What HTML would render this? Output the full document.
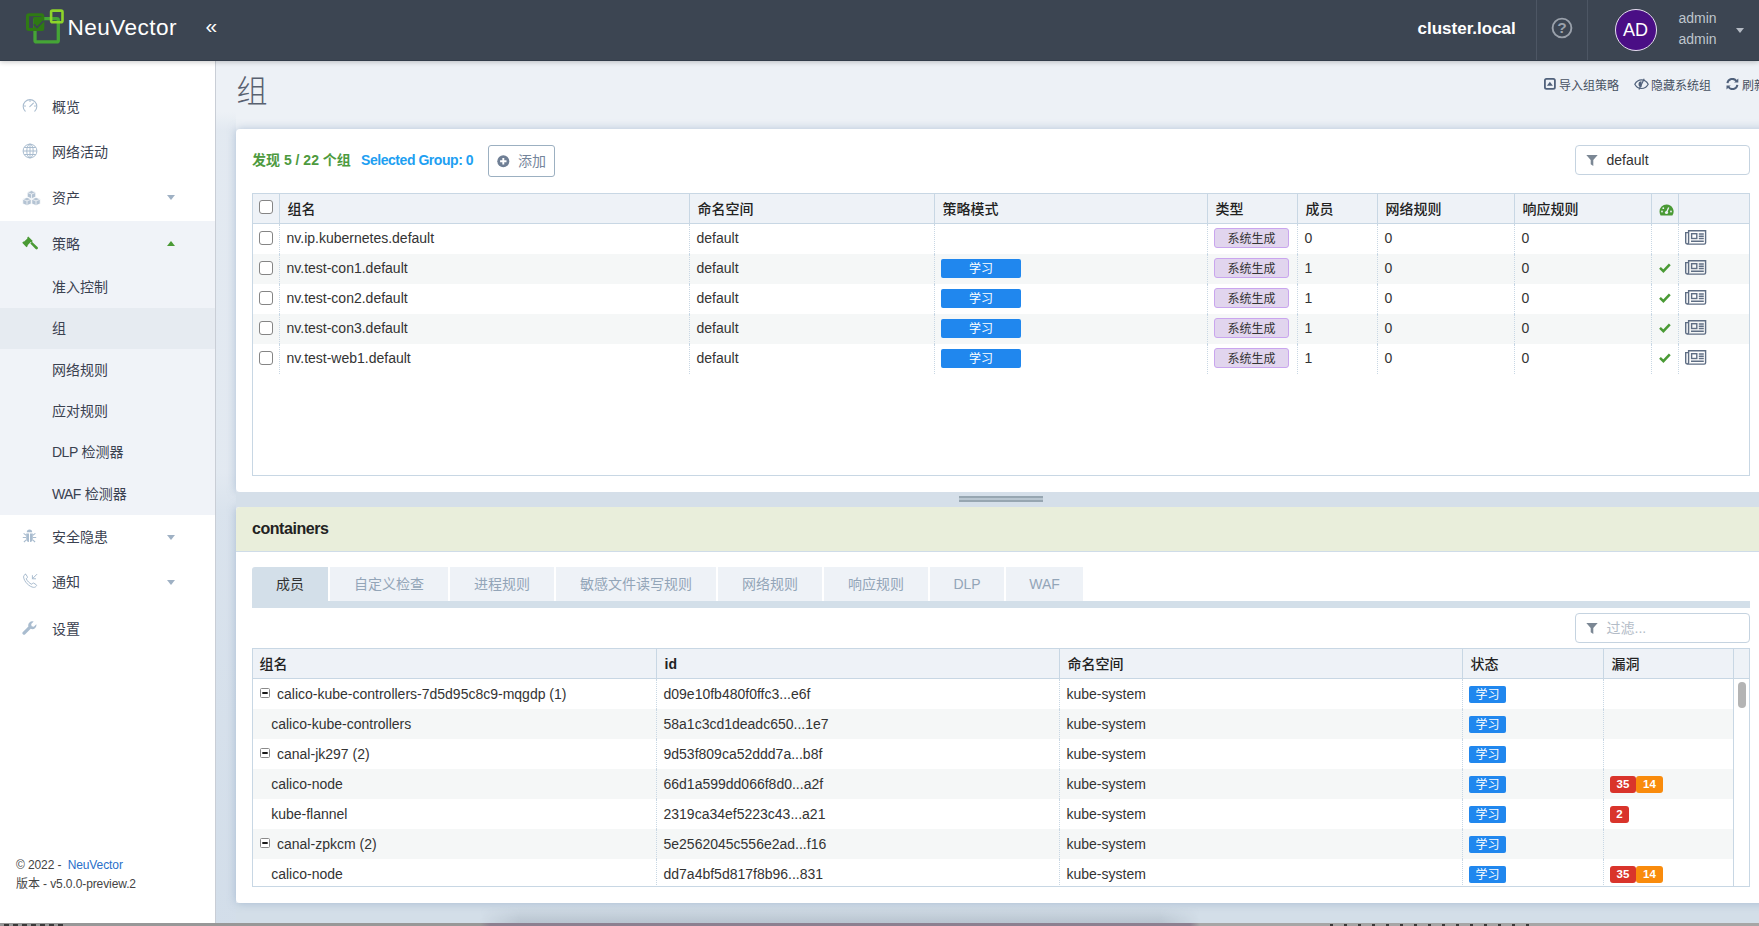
<!DOCTYPE html>
<html lang="zh-CN">
<head>
<meta charset="utf-8">
<title>NeuVector</title>
<style>
*{box-sizing:border-box;margin:0;padding:0}
html,body{width:1759px;height:926px;overflow:hidden}
body{position:relative;background:#edf1f6;font-family:"Liberation Sans","Noto Sans CJK SC",sans-serif;font-size:14px;color:#333;}
.abs{position:absolute}
/* header */
#hdr{position:absolute;left:0;top:0;width:1759px;height:61px;background:#3c4552;border-bottom:1px solid #323c49;z-index:20;box-shadow:0 1px 5px rgba(0,0,0,.22)}
#brand{position:absolute;left:67.500px;top:13.500px;font-size:22.600px;line-height:28px;color:#fff;letter-spacing:.45px}
#coll{position:absolute;left:205.500px;top:14px;font-size:21px;line-height:24px;color:#fff}
#cluster{position:absolute;left:1417.500px;top:17.500px;font-size:17px;line-height:22px;font-weight:bold;color:#fff;white-space:nowrap}
.vsep{position:absolute;top:0;width:1px;height:60px;background:#4d5664}
#avatar{position:absolute;left:1614.500px;top:9px;width:42px;height:42px;border-radius:50%;background:#4a0e85;border:1px solid #e6dff0;color:#fff;font-size:18px;line-height:40px;text-align:center}
.uname{position:absolute;left:1678.500px;font-size:14px;line-height:18px;color:#bfc5cd}
/* sidebar */
#side{position:absolute;left:0;top:60px;width:216px;height:866px;background:#fff;border-right:1px solid #c9ced6;z-index:10}
.mi{position:absolute;left:0;width:215px;height:45.5px;line-height:47.300px;padding-left:52px;font-size:14px;color:#3a4150}
.smi{position:absolute;left:0;width:215px;height:41.4px;line-height:43.200px;padding-left:52px;font-size:14px;color:#3a4150}
.mi svg,.mi .car{position:absolute}
.car{left:166.700px;top:20px;width:0;height:0;border-left:4.5px solid transparent;border-right:4.5px solid transparent;border-top:5px solid #9fb1c4}
.car.up{border-top:none;border-bottom:5px solid #4a9a35}
#sub{position:absolute;left:0;top:160.5px;width:215px;height:294px;background:#f0f3f8}
#foot{position:absolute;left:16px;top:796px;font-size:12px;line-height:19px;color:#444;letter-spacing:-.1px}
#foot a{color:#2a6fc9;text-decoration:none}
/* content */
.card{position:absolute;background:#fff;border-radius:4px 0 0 4px;box-shadow:0 0 9px rgba(120,150,185,.5)}
h1{position:absolute;left:236.500px;top:71px;font-size:31px;line-height:42px;font-weight:300;color:#596170;font-family:"Liberation Sans","Noto Sans CJK SC",sans-serif}
.act{position:absolute;top:77.500px;font-size:12px;line-height:16px;color:#465061;white-space:nowrap}
.grid{position:absolute;border:1px solid #c8d7e4;background:#fff;overflow:hidden}
.gh{position:absolute;left:0;top:0;height:30px;background:#eef2f7;border-bottom:1px solid #c8d7e4;width:100%}
.gh div{position:absolute;top:0;height:29px;line-height:31px;font-weight:500;font-size:14px;color:#222;border-left:1px solid #c8d7e4;padding-left:7.500px;white-space:nowrap}
.row{position:absolute;left:0;height:30px;width:100%}
.row.odd{background:#f5f7f7}
.row div.c{position:absolute;top:0;height:30px;line-height:28px;font-size:14px;color:#333;border-left:1px dotted #c8d7e4;padding-left:6.500px;white-space:nowrap;overflow:hidden}
.cb{position:absolute;left:7px;width:14px;height:14px;border:1px solid #858585;border-radius:3px;background:#fff}
#g2 .row div.c{line-height:30px}
.learn{position:absolute;left:6px;top:5px;width:80px;height:19px;border-radius:2px;background:#2087ee;color:#fff;font-size:12px;line-height:21px;text-align:center;overflow:hidden}
.sys{position:absolute;left:6px;top:4px;width:75px;height:20px;border-radius:3px;background:#e1d5ee;border:1px solid #c9a5ee;color:#333;font-size:12px;line-height:20px;text-align:center;overflow:hidden}
.slearn{position:absolute;left:6px;top:7px;width:37px;height:17px;border-radius:2px;background:#2087ee;color:#fff;font-size:12px;line-height:18px;text-align:center;overflow:hidden}
.vb{position:absolute;top:7px;height:17px;color:#fff;font-size:11.500px;font-weight:bold;line-height:17px;text-align:center}
.tab{position:absolute;top:567px;height:34px;line-height:34px;background:#eef2f7;color:#93a5b8;font-size:14px;text-align:center;white-space:nowrap}
.flt{position:absolute;height:30px;border:1px solid #c5d3e0;border-radius:4px;background:#fff;font-size:14px;line-height:28px;padding-left:30.500px;color:#333}
</style>
</head>
<body>
<!-- HEADER -->
<div id="hdr">
  <svg class="abs" style="left:24px;top:7px" width="44" height="40" viewBox="0 0 44 40">
    <rect x="11" y="11.600" width="23.300" height="23.300" rx="1.500" fill="none" stroke="#45a536" stroke-width="3.300"/>
    <rect x="9.400" y="10" width="10.500" height="13.500" fill="#2f7a14"/>
    <rect x="3.500" y="7.700" width="15.300" height="14.900" rx="1.500" fill="none" stroke="#2f7a14" stroke-width="3"/>
    <path d="M10 17.300l3 3.300l6.600-6.800" fill="none" stroke="#3c4553" stroke-width="1.700"/>
    <rect x="27.100" y="3.600" width="11.400" height="11.600" rx="1.500" fill="none" stroke="#8ed42a" stroke-width="2.600"/>
  </svg>
  <div id="brand">NeuVector</div>
  <div id="coll">«</div>
  <div id="cluster">cluster.local</div>
  <div class="vsep" style="left:1536px"></div>
  <div class="vsep" style="left:1587px"></div>
  <svg class="abs" style="left:1551px;top:17px" width="22" height="22" viewBox="0 0 22 22">
    <circle cx="11" cy="11" r="9.400" fill="none" stroke="#9aa1ab" stroke-width="1.900"/>
    <text x="11" y="16.400" font-size="15.500" font-weight="bold" text-anchor="middle" fill="#9aa1ab" font-family="Liberation Sans, sans-serif">?</text>
  </svg>
  <div id="avatar">AD</div>
  <div class="uname" style="top:9px">admin</div>
  <div class="uname" style="top:30px">admin</div>
  <div class="abs" style="left:1736px;top:28px;width:0;height:0;border-left:4.5px solid transparent;border-right:4.5px solid transparent;border-top:5px solid #b5bbc4"></div>
</div>

<!-- SIDEBAR -->
<div id="side">
  <div id="sub"></div>
  <div class="abs" style="left:0;top:248px;width:215px;height:41px;background:#e6ebf1"></div>
  <div class="mi" style="top:24px">概览</div>
  <div class="mi" style="top:68.500px">网络活动</div>
  <div class="mi" style="top:115px">资产<span class="car"></span></div>
  <div class="mi" style="top:160.500px">策略<span class="car up"></span></div>
  <div class="smi" style="top:206px">准入控制</div>
  <div class="smi" style="top:247.400px">组</div>
  <div class="smi" style="top:288.800px">网络规则</div>
  <div class="smi" style="top:330.200px">应对规则</div>
  <div class="smi" style="top:370.600px"><span style="letter-spacing:-.5px">DLP</span> 检测器</div>
  <div class="smi" style="top:413px"><span style="letter-spacing:-.6px">WAF</span> 检测器</div>
  <div class="mi" style="top:453.500px">安全隐患<span class="car" style="top:21px"></span></div>
  <div class="mi" style="top:499px">通知<span class="car" style="top:21px"></span></div>
  <div class="mi" style="top:545.500px">设置</div>

  <!-- sidebar icons -->
  <svg class="abs" style="left:22px;top:38px" width="16" height="16" viewBox="0 0 16 16" fill="none" stroke="#a9bccf" stroke-width="1.100" stroke-linecap="round"><path d="M3.200 13.200a6.800 6.800 0 1 1 9.600 0"/><path d="M7.800 8.600l3.600-3.400"/><path d="M2.500 8h1M8 2.500v1M12.500 8h1"/></svg>
  <svg class="abs" style="left:22px;top:83px" width="16" height="16" viewBox="0 0 16 16" fill="none" stroke="#a9bccf" stroke-width="1"><circle cx="8" cy="8" r="6.900"/><ellipse cx="8" cy="8" rx="3.200" ry="6.900"/><path d="M8 1v14M1.200 8h13.600M2.200 4.500h11.600M2.200 11.500h11.600"/></svg>
  <svg class="abs" style="left:22px;top:130px" width="19" height="16" viewBox="0 0 19 16"><g fill="#b4c3d3" stroke="#fff" stroke-width=".7" stroke-linejoin="round"><path d="M9.500 .6l4.200 1.700v4.600l-4.200 1.900l-4.200-1.900v-4.600z"/><path d="M5 7.400l4.200 1.700v4.700l-4.200 1.800l-4.200-1.800v-4.700z"/><path d="M14 7.400l4.200 1.700v4.700l-4.200 1.800l-4.200-1.800v-4.700z"/></g><g fill="none" stroke="#fff" stroke-width=".7"><path d="M5.300 2.400l4.200 1.700l4.200-1.700M9.500 4.100v4.500M.8 9.200l4.200 1.700l4.200-1.700M5 10.900v4.500M9.800 9.200l4.200 1.700l4.200-1.700M14 10.900v4.500"/></g></svg>
  <svg class="abs" style="left:22px;top:176px" width="16" height="15" viewBox="0 0 16 15"><g fill="#4a9a35"><path d="M6.200 .4l4.600 4.600l-1.300 1.300l-.7-.2l-3.200 3.200l.2.700l-1.300 1.300l-4.300-4.600l1.300-1.300l.7.200l3.200-3.200l-.2-.7z"/><path d="M8.300 7.400l1.600-1.600l5.600 5.300a1.300 1.300 0 0 1-1.900 1.900z"/></g></svg>
  <svg class="abs" style="left:22px;top:469px" width="15" height="15" viewBox="0 0 15 15"><g fill="#a9bccf"><path d="M4.800 3.300a2.700 2.700 0 0 1 5.400 0z"/><path d="M4.200 4.400h2.800v8.700a3.400 3.400 0 0 1-2.800-3.300zM8 4.400h2.800v5.400a3.400 3.400 0 0 1-2.800 3.300z"/></g><g stroke="#a9bccf" stroke-width="1.100" fill="none"><path d="M4.200 6.200l-2.600-1.800M4 8.500h-3.200M4.300 10.800l-2.400 2.200M10.800 6.200l2.600-1.800M11 8.500h3.200M10.700 10.800l2.400 2.200"/></g></svg>
  <svg class="abs" style="left:22px;top:513px" width="17" height="16" viewBox="0 0 17 16" fill="none" stroke="#a9bccf" stroke-width="1" stroke-linecap="round" stroke-linejoin="round"><path d="M3.300 1.300c-.9.500-1.800 1.400-1.700 2.700c.2 2.300 1.600 4.700 3.600 6.800c2 2 4.300 3.300 6.500 3.600c1.300.1 2.300-.8 2.800-1.700c.2-.4 0-.8-.3-1l-2.500-1.600c-.4-.2-.8-.1-1.100.2l-.8 1c-1.200-.5-2.300-1.300-3.300-2.300c-1-1-1.800-2.100-2.300-3.300l1-.8c.3-.3.400-.7.200-1.100l-1.500-2.400c-.2-.3-.6-.4-.6-.1z"/><path d="M14.800 1.400l-4.400 4.400M10.400 2.600v3.200h3.200"/></svg>
  <svg class="abs" style="left:22px;top:561px" width="15" height="15" viewBox="0 0 15 15"><path d="M14.300 3.200l-2.500 2.500l-2.200-.4l-.4-2.200l2.500-2.500a4 4 0 0 0-5.300 4.900l-5.500 5.500a1.600 1.600 0 0 0 2.300 2.300l5.500-5.500a4 4 0 0 0 5.600-4.600z" fill="#a9bccf"/></svg>
  <div id="foot">© 2022 - <a style="margin-left:3px">NeuVector</a><br>版本 - v5.0.0-preview.2</div>
</div>

<!-- CONTENT -->
<h1>组</h1>
<svg class="abs" style="left:1543.500px;top:78px" width="12" height="12" viewBox="0 0 12 12"><rect x=".9" y=".9" width="10" height="10" rx="1.600" fill="none" stroke="#50617b" stroke-width="1.800"/><path d="M2.900 7.800h6l-3-4z" fill="#50617b"/></svg>
<svg class="abs" style="left:1633.500px;top:78px" width="15" height="12" viewBox="0 0 15 12"><path d="M.8 6.200c1.500-2.700 4-4.300 6.700-4.300s5.200 1.600 6.700 4.300c-1.500 2.700-4 4.300-6.700 4.300s-5.200-1.600-6.700-4.300z" fill="none" stroke="#50617b" stroke-width="1.200"/><path d="M7.500 3.200a3 3 0 0 0 0 6z" fill="#50617b"/><path d="M10.200 .8l-5.200 10.600" stroke="#50617b" stroke-width="1.200"/></svg>
<svg class="abs" style="left:1726px;top:78px" width="13" height="12" viewBox="0 0 13 12"><g fill="none" stroke="#50617b" stroke-width="2"><path d="M1.400 5.200a5 5 0 0 1 9-2.200"/><path d="M11.400 6.800a5 5 0 0 1-9 2.200"/></g><path d="M12.300 .4v4.200h-4.200z" fill="#50617b"/><path d="M.5 11.600v-4.200h4.200z" fill="#50617b"/></svg>
<div class="act" style="left:1559px">导入组策略</div>
<div class="act" style="left:1651px">隐藏系统组</div>
<div class="act" style="left:1742px">刷新</div>

<div class="abs" style="left:216px;top:112px;width:20px;height:814px;background:linear-gradient(to bottom,rgba(140,170,200,0) 0,rgba(140,170,200,.11) 18px,rgba(140,170,200,.11) 360px,rgba(140,170,200,.2) 400px,rgba(140,170,200,.27) 790px)"></div>
<div class="abs" style="left:236px;top:903px;width:1523px;height:23px;background:#d3dee8"></div>
<div class="card" id="card1" style="left:236px;top:129px;width:1540px;height:363px"></div>

<!-- card1 content -->
<div class="abs" style="left:252px;top:151px;font-size:14px;line-height:18px;font-weight:bold;color:#4d9a3e;white-space:nowrap" id="found">发现 5 / 22 个组</div>
<div class="abs" style="left:361px;top:151px;font-size:14px;line-height:18px;font-weight:bold;color:#1e9ff2;white-space:nowrap;letter-spacing:-.45px" id="selg">Selected Group: 0</div>
<div class="abs" id="addbtn" style="left:488px;top:145px;width:67px;height:32px;border:1px solid #9cb0c1;border-radius:3px;background:#fff;color:#75859b;font-size:14px;line-height:30px;padding-left:29px">添加
  <svg class="abs" style="left:8px;top:9px" width="13" height="13" viewBox="0 0 13 13"><circle cx="6.300" cy="6.300" r="6" fill="#6f7f95"/><path d="M6.300 3.100v6.400M3.100 6.300h6.400" stroke="#fff" stroke-width="1.900"/></svg>
</div>
<div class="flt" id="flt1" style="left:1575px;top:145px;width:175px">default
  <svg class="abs" style="left:10px;top:9px" width="12" height="11" viewBox="0 0 12 11"><path d="M.3 0h11.400l-4.400 5v6l-2.600-1.800v-4.200z" fill="#7b8794"/></svg>
</div>
<div class="grid" id="g1" style="left:252px;top:193px;width:1498px;height:283px">
<div class="gh">
<div style="left:-1px;width:27px;border-left:none"><span class="cb" style="top:6px"></span></div>
<div style="left:26px;width:410px">组名</div>
<div style="left:436px;width:245px">命名空间</div>
<div style="left:681px;width:273px">策略模式</div>
<div style="left:954px;width:90px">类型</div>
<div style="left:1044px;width:80px">成员</div>
<div style="left:1124px;width:137px">网络规则</div>
<div style="left:1261px;width:137px">响应规则</div>
<div style="left:1398px;width:27px"><svg class="abs" style="left:6.600px;top:9.500px" width="15" height="12" viewBox="0 0 15 12"><path d="M7.500 .5a7 7 0 0 0-7 7c0 1.500.4 2.800 1.100 3.900h11.800a7 7 0 0 0-5.900-10.900z" fill="#4a9a35"/><circle cx="7.500" cy="8.500" r="1.600" fill="#eef2f7"/><path d="M7.500 8.500l2.200-5" stroke="#eef2f7" stroke-width="1.300"/><circle cx="3" cy="7.500" r=".9" fill="#eef2f7"/><circle cx="4.300" cy="4.200" r=".9" fill="#eef2f7"/><circle cx="12" cy="7.500" r=".9" fill="#eef2f7"/></svg></div>
<div style="left:1425px;width:71px"></div>
</div>
<div class="row" style="top:30px">
<div class="c" style="left:-1px;width:27px;border-left:none"><span class="cb" style="top:7px"></span></div>
<div class="c" style="left:26px;width:410px">nv.ip.kubernetes.default</div>
<div class="c" style="left:436px;width:245px">default</div>
<div class="c" style="left:681px;width:273px"></div>
<div class="c" style="left:954px;width:90px"><span class="sys">系统生成</span></div>
<div class="c" style="left:1044px;width:80px">0</div>
<div class="c" style="left:1124px;width:137px">0</div>
<div class="c" style="left:1261px;width:137px">0</div>
<div class="c" style="left:1398px;width:27px"></div>
<div class="c" style="left:1425px;width:71px"><svg class="abs" style="left:5.600px;top:6px" width="22" height="15" viewBox="0 0 22 15" fill="none" stroke="#5f6e84" stroke-width="1.400"><path d="M3.200 2.600h-2.500v10a1.450 1.450 0 0 0 2.900 0v-11.900h17v12a1.400 1.400 0 0 1-1.400 1.400h-17"/><rect x="6.600" y="3.700" width="5.200" height="4.800"/><path d="M13.800 4h5M13.800 6.250h5M13.800 8.500h5M6 11.250h12.800"/></svg></div>
</div>
<div class="row odd" style="top:60px">
<div class="c" style="left:-1px;width:27px;border-left:none"><span class="cb" style="top:7px"></span></div>
<div class="c" style="left:26px;width:410px">nv.test-con1.default</div>
<div class="c" style="left:436px;width:245px">default</div>
<div class="c" style="left:681px;width:273px"><span class="learn">学习</span></div>
<div class="c" style="left:954px;width:90px"><span class="sys">系统生成</span></div>
<div class="c" style="left:1044px;width:80px">1</div>
<div class="c" style="left:1124px;width:137px">0</div>
<div class="c" style="left:1261px;width:137px">0</div>
<div class="c" style="left:1398px;width:27px"><svg class="abs" style="left:6.600px;top:9.200px" width="12" height="10" viewBox="0 0 12 10"><path d="M1 4.900l3.400 3.300l6.400-6.900" fill="none" stroke="#4a9a35" stroke-width="2.500"/></svg></div>
<div class="c" style="left:1425px;width:71px"><svg class="abs" style="left:5.600px;top:6px" width="22" height="15" viewBox="0 0 22 15" fill="none" stroke="#5f6e84" stroke-width="1.400"><path d="M3.200 2.600h-2.500v10a1.450 1.450 0 0 0 2.900 0v-11.900h17v12a1.400 1.400 0 0 1-1.400 1.400h-17"/><rect x="6.600" y="3.700" width="5.200" height="4.800"/><path d="M13.800 4h5M13.800 6.250h5M13.800 8.500h5M6 11.250h12.800"/></svg></div>
</div>
<div class="row" style="top:90px">
<div class="c" style="left:-1px;width:27px;border-left:none"><span class="cb" style="top:7px"></span></div>
<div class="c" style="left:26px;width:410px">nv.test-con2.default</div>
<div class="c" style="left:436px;width:245px">default</div>
<div class="c" style="left:681px;width:273px"><span class="learn">学习</span></div>
<div class="c" style="left:954px;width:90px"><span class="sys">系统生成</span></div>
<div class="c" style="left:1044px;width:80px">1</div>
<div class="c" style="left:1124px;width:137px">0</div>
<div class="c" style="left:1261px;width:137px">0</div>
<div class="c" style="left:1398px;width:27px"><svg class="abs" style="left:6.600px;top:9.200px" width="12" height="10" viewBox="0 0 12 10"><path d="M1 4.900l3.400 3.300l6.400-6.900" fill="none" stroke="#4a9a35" stroke-width="2.500"/></svg></div>
<div class="c" style="left:1425px;width:71px"><svg class="abs" style="left:5.600px;top:6px" width="22" height="15" viewBox="0 0 22 15" fill="none" stroke="#5f6e84" stroke-width="1.400"><path d="M3.200 2.600h-2.500v10a1.450 1.450 0 0 0 2.900 0v-11.900h17v12a1.400 1.400 0 0 1-1.400 1.400h-17"/><rect x="6.600" y="3.700" width="5.200" height="4.800"/><path d="M13.800 4h5M13.800 6.250h5M13.800 8.500h5M6 11.250h12.800"/></svg></div>
</div>
<div class="row odd" style="top:120px">
<div class="c" style="left:-1px;width:27px;border-left:none"><span class="cb" style="top:7px"></span></div>
<div class="c" style="left:26px;width:410px">nv.test-con3.default</div>
<div class="c" style="left:436px;width:245px">default</div>
<div class="c" style="left:681px;width:273px"><span class="learn">学习</span></div>
<div class="c" style="left:954px;width:90px"><span class="sys">系统生成</span></div>
<div class="c" style="left:1044px;width:80px">1</div>
<div class="c" style="left:1124px;width:137px">0</div>
<div class="c" style="left:1261px;width:137px">0</div>
<div class="c" style="left:1398px;width:27px"><svg class="abs" style="left:6.600px;top:9.200px" width="12" height="10" viewBox="0 0 12 10"><path d="M1 4.900l3.400 3.300l6.400-6.900" fill="none" stroke="#4a9a35" stroke-width="2.500"/></svg></div>
<div class="c" style="left:1425px;width:71px"><svg class="abs" style="left:5.600px;top:6px" width="22" height="15" viewBox="0 0 22 15" fill="none" stroke="#5f6e84" stroke-width="1.400"><path d="M3.200 2.600h-2.500v10a1.450 1.450 0 0 0 2.900 0v-11.900h17v12a1.400 1.400 0 0 1-1.400 1.400h-17"/><rect x="6.600" y="3.700" width="5.200" height="4.800"/><path d="M13.800 4h5M13.800 6.250h5M13.800 8.500h5M6 11.250h12.800"/></svg></div>
</div>
<div class="row" style="top:150px">
<div class="c" style="left:-1px;width:27px;border-left:none"><span class="cb" style="top:7px"></span></div>
<div class="c" style="left:26px;width:410px">nv.test-web1.default</div>
<div class="c" style="left:436px;width:245px">default</div>
<div class="c" style="left:681px;width:273px"><span class="learn">学习</span></div>
<div class="c" style="left:954px;width:90px"><span class="sys">系统生成</span></div>
<div class="c" style="left:1044px;width:80px">1</div>
<div class="c" style="left:1124px;width:137px">0</div>
<div class="c" style="left:1261px;width:137px">0</div>
<div class="c" style="left:1398px;width:27px"><svg class="abs" style="left:6.600px;top:9.200px" width="12" height="10" viewBox="0 0 12 10"><path d="M1 4.900l3.400 3.300l6.400-6.900" fill="none" stroke="#4a9a35" stroke-width="2.500"/></svg></div>
<div class="c" style="left:1425px;width:71px"><svg class="abs" style="left:5.600px;top:6px" width="22" height="15" viewBox="0 0 22 15" fill="none" stroke="#5f6e84" stroke-width="1.400"><path d="M3.200 2.600h-2.500v10a1.450 1.450 0 0 0 2.900 0v-11.900h17v12a1.400 1.400 0 0 1-1.400 1.400h-17"/><rect x="6.600" y="3.700" width="5.200" height="4.800"/><path d="M13.800 4h5M13.800 6.250h5M13.800 8.500h5M6 11.250h12.800"/></svg></div>
</div>
</div>
<div class="card" id="card2" style="left:236px;top:507px;width:1540px;height:396px;overflow:hidden">
  <div class="abs" style="left:0;top:0;width:100%;height:45px;background:#e9eedb;border-bottom:1px solid #cfdce8"></div>
  <div class="abs" style="left:16px;top:12px;font-size:16px;line-height:20px;font-weight:bold;color:#222;letter-spacing:-.45px">containers</div>
</div>

<!-- card2 content -->
<div class="tab" style="left:252px;width:76px;background:#d3dfe9;color:#333;border-radius:3px 0 0 0">成员</div>
<div class="tab" style="left:330px;width:118px">自定义检查</div>
<div class="tab" style="left:450px;width:104px">进程规则</div>
<div class="tab" style="left:556px;width:160px">敏感文件读写规则</div>
<div class="tab" style="left:718px;width:104px">网络规则</div>
<div class="tab" style="left:824px;width:104px">响应规则</div>
<div class="tab" style="left:930px;width:74px">DLP</div>
<div class="tab" style="left:1006px;width:77px">WAF</div>
<div class="abs" style="left:252px;top:601px;width:1498px;height:7px;background:#d3dfe9"></div>
<div class="flt" id="flt2" style="left:1575px;top:613px;width:175px;color:#b3bcc7">过滤...
  <svg class="abs" style="left:10px;top:9px" width="12" height="11" viewBox="0 0 12 11"><path d="M.3 0h11.400l-4.400 5v6l-2.600-1.800v-4.200z" fill="#7b8794"/></svg>
</div>
<div class="grid" id="g2" style="left:252px;top:648px;width:1498px;height:239px">
<div class="gh">
<div style="left:-1px;width:404px;border-left:none">组名</div>
<div style="left:403px;width:403px"><b>id</b></div>
<div style="left:806px;width:403px">命名空间</div>
<div style="left:1209px;width:141px">状态</div>
<div style="left:1350px;width:130px">漏洞</div>
<div style="left:1480px;width:16px"></div>
</div>
<div class="row" style="top:30px">
<div class="c" style="left:-1px;width:404px;border-left:none"><svg class="abs" style="left:8px;top:9px" width="10" height="10" viewBox="0 0 10 10"><rect x=".5" y=".5" width="9" height="9" rx="1" fill="#fff" stroke="#8a8a8a" stroke-width="1"/><path d="M2.300 5h5.400" stroke="#1a1a1a" stroke-width="2"/></svg><span style="padding-left:18.500px">calico-kube-controllers-7d5d95c8c9-mqgdp (1)</span></div>
<div class="c" style="left:403px;width:403px">d09e10fb480f0ffc3...e6f</div>
<div class="c" style="left:806px;width:403px">kube-system</div>
<div class="c" style="left:1209px;width:141px"><span class="slearn">学习</span></div>
<div class="c" style="left:1350px;width:130px"></div>
<div class="c" style="left:1480px;width:16px;background:#fff;border-left:1px solid #c8d7e4"></div>
</div>
<div class="row odd" style="top:60px">
<div class="c" style="left:-1px;width:404px;border-left:none"><span style="padding-left:12.700px">calico-kube-controllers</span></div>
<div class="c" style="left:403px;width:403px">58a1c3cd1deadc650...1e7</div>
<div class="c" style="left:806px;width:403px">kube-system</div>
<div class="c" style="left:1209px;width:141px"><span class="slearn">学习</span></div>
<div class="c" style="left:1350px;width:130px"></div>
<div class="c" style="left:1480px;width:16px;background:#fff;border-left:1px solid #c8d7e4"></div>
</div>
<div class="row" style="top:90px">
<div class="c" style="left:-1px;width:404px;border-left:none"><svg class="abs" style="left:8px;top:9px" width="10" height="10" viewBox="0 0 10 10"><rect x=".5" y=".5" width="9" height="9" rx="1" fill="#fff" stroke="#8a8a8a" stroke-width="1"/><path d="M2.300 5h5.400" stroke="#1a1a1a" stroke-width="2"/></svg><span style="padding-left:18.500px">canal-jk297 (2)</span></div>
<div class="c" style="left:403px;width:403px">9d53f809ca52ddd7a...b8f</div>
<div class="c" style="left:806px;width:403px">kube-system</div>
<div class="c" style="left:1209px;width:141px"><span class="slearn">学习</span></div>
<div class="c" style="left:1350px;width:130px"></div>
<div class="c" style="left:1480px;width:16px;background:#fff;border-left:1px solid #c8d7e4"></div>
</div>
<div class="row odd" style="top:120px">
<div class="c" style="left:-1px;width:404px;border-left:none"><span style="padding-left:12.700px">calico-node</span></div>
<div class="c" style="left:403px;width:403px">66d1a599dd066f8d0...a2f</div>
<div class="c" style="left:806px;width:403px">kube-system</div>
<div class="c" style="left:1209px;width:141px"><span class="slearn">学习</span></div>
<div class="c" style="left:1350px;width:130px"><span class="vb" style="left:6px;width:26px;background:#d9342b;border-radius:3px">35</span><span class="vb" style="left:32px;width:27px;background:#f98b0c;border-radius:3px">14</span></div>
<div class="c" style="left:1480px;width:16px;background:#fff;border-left:1px solid #c8d7e4"></div>
</div>
<div class="row" style="top:150px">
<div class="c" style="left:-1px;width:404px;border-left:none"><span style="padding-left:12.700px">kube-flannel</span></div>
<div class="c" style="left:403px;width:403px">2319ca34ef5223c43...a21</div>
<div class="c" style="left:806px;width:403px">kube-system</div>
<div class="c" style="left:1209px;width:141px"><span class="slearn">学习</span></div>
<div class="c" style="left:1350px;width:130px"><span class="vb" style="left:6px;width:19px;background:#d9342b;border-radius:3px">2</span></div>
<div class="c" style="left:1480px;width:16px;background:#fff;border-left:1px solid #c8d7e4"></div>
</div>
<div class="row odd" style="top:180px">
<div class="c" style="left:-1px;width:404px;border-left:none"><svg class="abs" style="left:8px;top:9px" width="10" height="10" viewBox="0 0 10 10"><rect x=".5" y=".5" width="9" height="9" rx="1" fill="#fff" stroke="#8a8a8a" stroke-width="1"/><path d="M2.300 5h5.400" stroke="#1a1a1a" stroke-width="2"/></svg><span style="padding-left:18.500px">canal-zpkcm (2)</span></div>
<div class="c" style="left:403px;width:403px">5e2562045c556e2ad...f16</div>
<div class="c" style="left:806px;width:403px">kube-system</div>
<div class="c" style="left:1209px;width:141px"><span class="slearn">学习</span></div>
<div class="c" style="left:1350px;width:130px"></div>
<div class="c" style="left:1480px;width:16px;background:#fff;border-left:1px solid #c8d7e4"></div>
</div>
<div class="row" style="top:210px">
<div class="c" style="left:-1px;width:404px;border-left:none"><span style="padding-left:12.700px">calico-node</span></div>
<div class="c" style="left:403px;width:403px">dd7a4bf5d817f8b96...831</div>
<div class="c" style="left:806px;width:403px">kube-system</div>
<div class="c" style="left:1209px;width:141px"><span class="slearn">学习</span></div>
<div class="c" style="left:1350px;width:130px"><span class="vb" style="left:6px;width:26px;background:#d9342b;border-radius:3px">35</span><span class="vb" style="left:32px;width:27px;background:#f98b0c;border-radius:3px">14</span></div>
<div class="c" style="left:1480px;width:16px;background:#fff;border-left:1px solid #c8d7e4"></div>
</div>
<div class="abs" style="left:1485px;top:33px;width:8px;height:26px;border-radius:4px;background:#b4b4b4"></div>
</div>
<div class="abs" style="left:236px;top:492px;width:1523px;height:15px;background:#d5dfe9"></div>
<div class="abs" style="left:959px;top:496px;width:84px;height:6px;border-top:2px solid #97a6b1;border-bottom:2px solid #97a6b1;background:#b9c6d0"></div>
<!-- bottom strip -->
<div class="abs" style="left:480px;top:906px;width:720px;height:17px;background:linear-gradient(to bottom,rgba(90,105,120,0),rgba(90,105,120,.22));-webkit-mask-image:linear-gradient(to right,transparent 0,#000 40px,#000 680px,transparent 720px);mask-image:linear-gradient(to right,transparent 0,#000 40px,#000 680px,transparent 720px);z-index:29"></div>
<div class="abs" style="left:0;top:922.500px;width:1759px;height:3.500px;background:linear-gradient(to right,#989898 0,#989898 480px,#8c8090 490px,#8c8090 1190px,#a6a6a6 1200px,#a6a6a6 100%);z-index:30"></div>
<div class="abs" style="left:4px;top:923.500px;width:60px;height:2.500px;background:repeating-linear-gradient(to right,#3a3a3a 0,#3a3a3a 5px,transparent 5px,transparent 9px);z-index:31"></div>
<div class="abs" style="left:1330px;top:923.500px;width:200px;height:2.500px;background:repeating-linear-gradient(to right,#3a3a3a 0,#3a3a3a 3px,transparent 3px,transparent 14px);z-index:31"></div>
</body>
</html>
